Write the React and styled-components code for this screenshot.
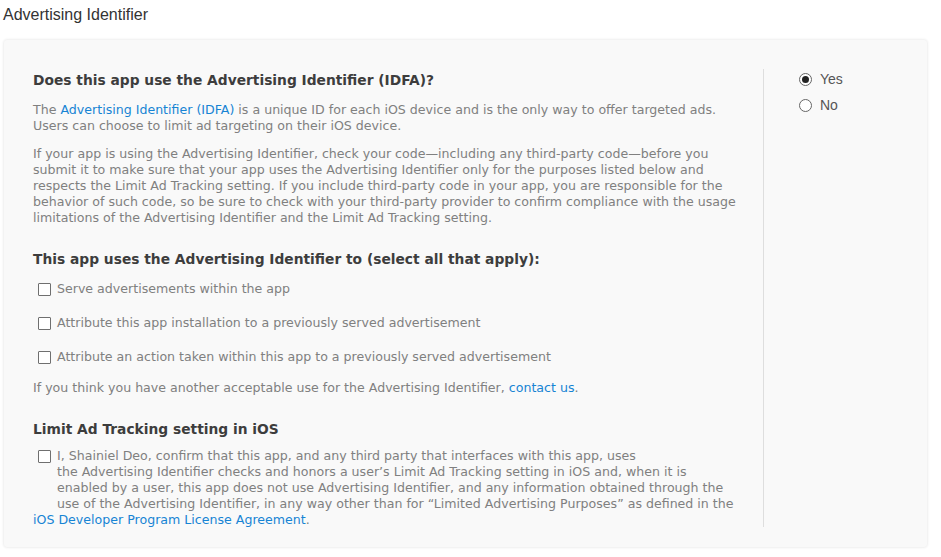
import styled, { createGlobalStyle } from "styled-components";

const GlobalStyle = createGlobalStyle`
  body {
    margin: 0;
    background: #fff;
    font-family: "DejaVu Sans", Verdana, sans-serif;
  }
`;

const Page = styled.div`
  width: 941px;
  height: 557px;
  overflow: hidden;
`;

const Title = styled.h2`
  margin: 0;
  padding: 6px 0 0 3px;
  height: 40px;
  box-sizing: border-box;
  font-family: "Liberation Sans", Arial, sans-serif;
  font-weight: 400;
  font-size: 16px;
  line-height: 18px;
  color: #333;
`;

const Panel = styled.div`
  margin: 0 14px 0 4px;
  height: 507px;
  box-sizing: border-box;
  background: #f9f9f9;
  border-radius: 3px;
  box-shadow: 0 0 3px rgba(0, 0, 0, 0.14);
  display: flex;
  padding: 29px 0 20px 29px;
`;

const Main = styled.div`
  width: 710px;
  padding-right: 20px;
  border-right: 1px solid #dedede;
`;

const Side = styled.div`
  padding: 2px 0 0 35px;
  display: flex;
  flex-direction: column;
  gap: 10px;
`;

const Heading = styled.h3`
  margin: ${({ $top }) => $top || 0}px 0 0;
  font-size: 13.8px;
  font-weight: 700;
  color: #3d3d3d;
  line-height: 20px;
`;

const Text = styled.p`
  margin: ${({ $top }) => $top || 0}px 0 0;
  font-size: 12.6px;
  line-height: 16px;
  color: #808080;
`;

const Link = styled.a`
  color: #1784d4;
  text-decoration: none;
`;

const Options = styled.div`
  margin-top: 12px;
  display: flex;
  flex-direction: column;
  gap: 18px;
`;

const Option = styled.label`
  display: flex;
  align-items: center;
  gap: 6px;
  padding-left: 5px;
  font-size: 12.6px;
  line-height: 16px;
  color: #808080;
`;

const Box = styled.span`
  width: 11px;
  height: 11px;
  border: 1px solid #6f6f6f;
  border-radius: 1px;
  background: #fff;
  flex-shrink: 0;
`;

const Consent = styled.div`
  margin-top: 9px;
  display: flex;
  gap: 6px;
  padding-left: 5px;
  padding-right: 4px;
  font-size: 12.6px;
  line-height: 16px;
  color: #808080;
`;

const ConsentBox = styled(Box)`
  margin-top: 2px;
`;

const Radio = styled.label`
  display: flex;
  align-items: center;
  gap: 8px;
  height: 16px;
  font-family: "Liberation Sans", Arial, sans-serif;
  font-size: 14px;
  color: #555;
`;

const Dot = styled.span`
  width: 11px;
  height: 11px;
  border-radius: 50%;
  border: 1px solid #666;
  background: #fff;
  display: flex;
  align-items: center;
  justify-content: center;
  &::after {
    content: "";
    width: 7px;
    height: 7px;
    border-radius: 50%;
    background: ${({ $on }) => ($on ? "#222" : "transparent")};
  }
`;

const uses = [
  "Serve advertisements within the app",
  "Attribute this app installation to a previously served advertisement",
  "Attribute an action taken within this app to a previously served advertisement",
];

export default function App() {
  return (
    <Page>
      <GlobalStyle />
      <Title>Advertising Identifier</Title>
      <Panel>
        <Main>
          <Heading $top={1}>Does this app use the Advertising Identifier (IDFA)?</Heading>
          <Text $top={12}>
            The <Link href="#">Advertising Identifier (IDFA)</Link> is a unique ID for each iOS
            device and is the only way to offer targeted ads.
            <br />
            Users can choose to limit ad targeting on their iOS device.
          </Text>
          <Text $top={12}>
            If your app is using the Advertising Identifier, check your code—including any
            third-party code—before you submit it to make sure that your app uses the
            Advertising Identifier only for the purposes listed below and respects the Limit Ad
            Tracking setting. If you include third-party code in your app, you are responsible
            for the behavior of such code, so be sure to check with your third-party provider to
            confirm compliance with the usage limitations of the Advertising Identifier and the
            Limit Ad Tracking setting.
          </Text>
          <Heading $top={23}>
            This app uses the Advertising Identifier to (select all that apply):
          </Heading>
          <Options>
            {uses.map((u) => (
              <Option key={u}>
                <Box />
                {u}
              </Option>
            ))}
          </Options>
          <Text $top={15}>
            If you think you have another acceptable use for the Advertising Identifier,{" "}
            <Link href="#">contact us</Link>.
          </Text>
          <Heading $top={23}>Limit Ad Tracking setting in iOS</Heading>
          <Consent>
            <ConsentBox />
            <div>
              I, Shainiel Deo, confirm that this app, and any third party that interfaces with
              this app, uses
              <br />
              the Advertising Identifier checks and honors a user’s Limit Ad Tracking setting in
              iOS and, when it is
              <br />
              enabled by a user, this app does not use Advertising Identifier, and any
              information obtained through the use of the Advertising Identifier, in any way
              other than for “Limited Advertising Purposes” as defined in the
            </div>
          </Consent>
          <Text>
            <Link href="#">iOS Developer Program License Agreement</Link>.
          </Text>
        </Main>
        <Side>
          <Radio>
            <Dot $on />
            Yes
          </Radio>
          <Radio>
            <Dot />
            No
          </Radio>
        </Side>
      </Panel>
    </Page>
  );
}
